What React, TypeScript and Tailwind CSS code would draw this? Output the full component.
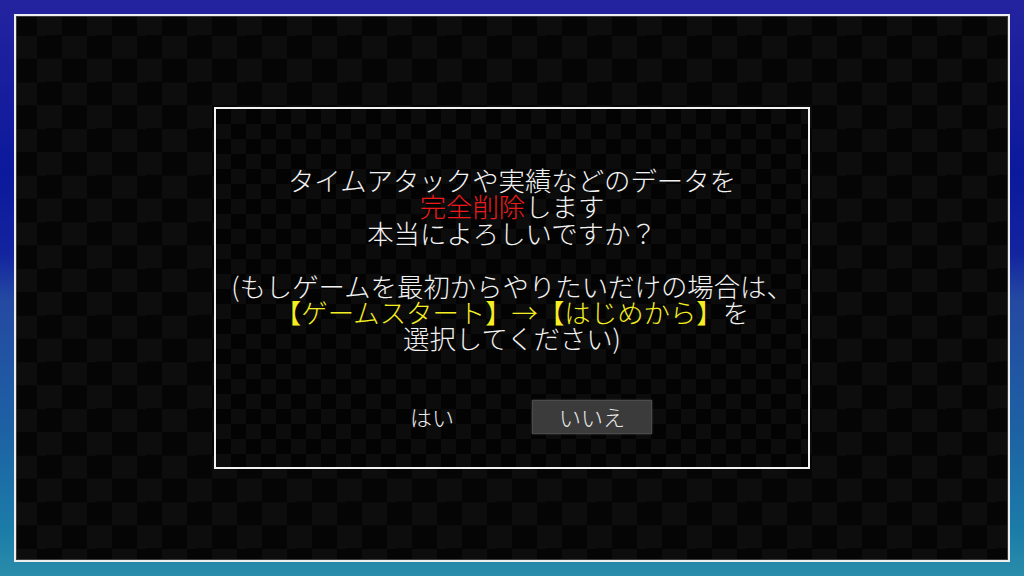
import React from 'react';

const Line: React.FC<{ children?: React.ReactNode }> = ({ children }) => (
    <div className="h-[26.4px] whitespace-nowrap">{children}</div>
);

const App: React.FC = () => {
    return (
        <div className="w-[1024px] h-[576px] overflow-hidden p-[14px] bg-[linear-gradient(180deg,#24239f_0%,#0b199c_30%,#13249f_44%,#2449a2_52%,#1d62a4_75%,#1b7ca8_92%,#2a8daa_100%)] font-['Noto_Sans_CJK_JP','Noto_Sans',sans-serif] font-light">
            {/* outer frame with large checker */}
            <div className="w-full h-full border-2 border-[#ededed] shadow-[inset_0_0_0_1px_#3a3a3a] bg-[repeating-conic-gradient(#0d0d0d_0_25%,#050505_0_50%)] bg-[length:50px_46.67px] bg-[position:-4px_-4px] flex items-center justify-center">
                {/* confirm dialog */}
                <div className="w-[596px] h-[362px] border-2 border-[#f2f2f2] bg-[repeating-conic-gradient(#0c0c0c_0_25%,#030303_0_50%)] bg-[length:30px_30px] flex flex-col items-center pt-[58px]">
                    <div className="text-[26.4px] leading-[26.4px] text-[#f2f2f2] text-center flex flex-col items-center">
                        <Line>タイムアタックや実績などのデータを</Line>
                        <Line>
                            <span className="text-[#ec1a1a]">完全削除</span>します
                        </Line>
                        <Line>本当によろしいですか？</Line>
                        <Line />
                        <Line>(もしゲームを最初からやりたいだけの場合は、</Line>
                        <Line>
                            <span className="text-[#f4ee22]">【ゲームスタート】→【はじめから】</span>を
                        </Line>
                        <Line>選択してください)</Line>
                    </div>

                    <div className="mt-[48px] flex gap-[40px] text-[22px] text-[#ececec]">
                        <div className="w-[120px] h-[34px] flex items-center justify-center">はい</div>
                        <div className="w-[120px] h-[34px] flex items-center justify-center bg-[#3b3b3b] border border-[#4b4b4b] shadow-[0_0_2px_#4a4a4a]">
                            いいえ
                        </div>
                    </div>
                </div>
            </div>
        </div>
    );
};

export default App;
